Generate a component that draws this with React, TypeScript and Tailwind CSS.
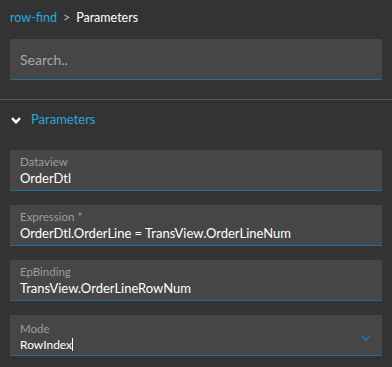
const fields = [
  { label: "Dataview", value: "OrderDtl" },
  { label: "Expression *", value: "OrderDtl.OrderLine = TransView.OrderLineNum" },
  { label: "EpBinding", value: "TransView.OrderLineRowNum" },
];

function Field({ label, value }: { label: string; value: string }) {
  return (
    <div className="h-[41px] bg-[#464646] border-b border-[#1b6fa6] px-[10px] pt-[4px]">
      <div className="text-[11.5px] leading-[15px] text-[#9c9c9c]">{label}</div>
      <div className="text-[13px] leading-[19px] text-white whitespace-nowrap">{value}</div>
    </div>
  );
}

export default function App() {
  return (
    <div
      className="w-[392px] h-[367px] bg-[#333333] overflow-hidden"
      style={{ fontFamily: "Lato, 'Open Sans', sans-serif" }}
    >
      <div className="px-[10px] pt-[10px] h-[39px] text-[12.5px] leading-[16px] flex items-start">
        <span className="text-[#27a8e0]">row-find</span>
        <span className="text-[#bdbdbd] mx-[6px]">&gt;</span>
        <span className="text-white">Parameters</span>
      </div>
      <div className="px-[10px]">
        <div className="h-[41px] bg-[#464646] border-b border-[#1b6fa6] px-[10px] flex items-center text-[14px] text-[#a8a8a8]">
          Search..
        </div>
      </div>
      <div className="mt-[19px] border-t border-[#555555]" />
      <div className="h-[40px] mb-[10px] flex items-center pl-[11px] gap-[10px]">
        <svg width="10" height="7" viewBox="0 0 10 7" fill="none" stroke="white" strokeWidth="2.4">
          <polyline points="1,1.2 5,5.2 9,1.2" />
        </svg>
        <span className="text-[13px] text-[#27a8e0]">Parameters</span>
      </div>
      <div className="px-[10px] flex flex-col gap-[14px]">
        {fields.map(f => (
          <Field key={f.label} label={f.label} value={f.value} />
        ))}
        <div className="h-[41px] bg-[#464646] border-b border-[#1b6fa6] pl-[10px] pr-[11px] pt-[6px] flex items-start justify-between">
          <div>
            <div className="text-[11.5px] leading-[15px] text-[#9c9c9c]">Mode</div>
            <div className="text-[12px] leading-[17px] text-white flex items-center">
              RowIndex<span className="inline-block w-px h-[13px] bg-white" />
            </div>
          </div>
          <svg width="10" height="6" viewBox="0 0 10 6" fill="none" stroke="#1b6fa6" strokeWidth="2" className="mt-[14px]">
            <polyline points="1,1 5,5 9,1" />
          </svg>
        </div>
      </div>
    </div>
  );
}
